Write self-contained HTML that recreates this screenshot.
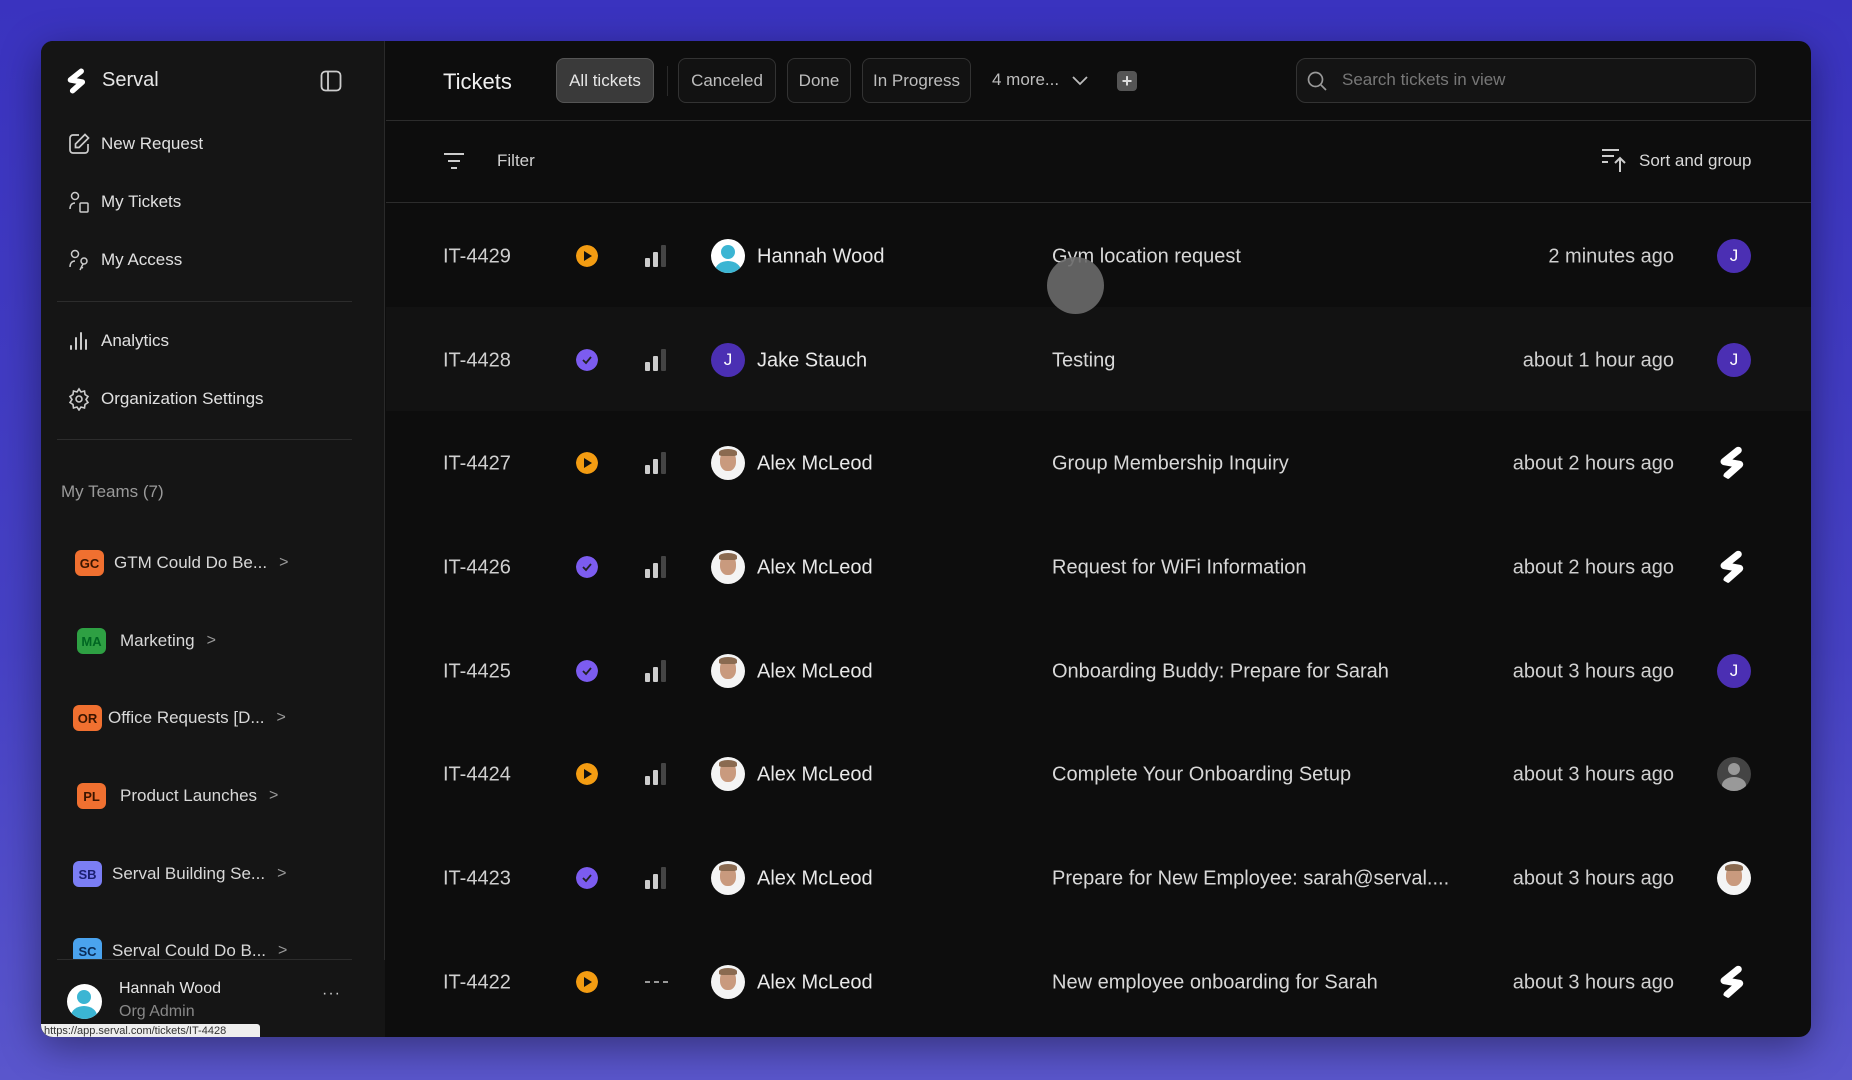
<!DOCTYPE html>
<html><head><meta charset="utf-8"><style>
*{box-sizing:border-box;margin:0;padding:0}
body{width:1852px;height:1080px;overflow:hidden;font-family:"Liberation Sans",sans-serif;background:linear-gradient(180deg,#3a33bf 0%,#4641c4 60%,#5a56cc 100%);position:relative}
.win{position:absolute;left:41px;top:41px;width:1770px;height:996px;border-radius:12px;background:#0d0d0d;overflow:hidden;box-shadow:0 10px 40px rgba(0,0,0,.4)}
.side{position:absolute;left:0;top:0;width:344px;height:100%;background:#151515;border-right:1px solid #2a2a2a}
.abs{position:absolute}
.t{color:#e6e6e6;white-space:nowrap}
.nav{position:absolute;left:26px;font-size:17px;color:#e0e0e0;display:flex;align-items:center;gap:10px}
.nav svg{width:24px;height:24px}
.hr{position:absolute;height:1px;background:#2c2c2c}
.team{position:absolute;display:flex;align-items:center;font-size:17px;color:#d8d8d8}
.badge{width:29px;height:26px;border-radius:6px;font-size:13px;font-weight:bold;display:flex;align-items:center;justify-content:center;margin-right:10px}
.chev{color:#999;margin-left:12px;font-size:16px}
.chip{position:absolute;top:17px;height:45px;border:1px solid #333;border-radius:8px;color:#bdbdbd;font-size:17px;display:flex;align-items:center;justify-content:center;background:#121212}
.row{position:absolute;left:345px;width:1425px;height:104px}
.row .t{position:absolute;top:52%;transform:translateY(-50%);font-size:20px}
.id{left:57px;color:#cfcfcf!important}
.name{left:371px;color:#e8e8e8}
.title{left:666px;color:#d8d8d8!important}
.time{right:137px;color:#d0d0d0!important}
.st{position:absolute;left:190px;top:42px;width:22px;height:22px;border-radius:50%}
.bars{position:absolute;left:259px;top:42px}
.av{position:absolute;left:325px;top:36px;width:34px;height:34px;border-radius:50%;overflow:hidden}
.as{position:absolute;left:1331px;top:36px;width:34px;height:34px;border-radius:50%;overflow:hidden}
.j{background:#4b2fb3;color:#fff;font-size:17px;display:flex;align-items:center;justify-content:center}
.face{background:#f4f4f4}
.face::before{content:"";position:absolute;left:9px;top:5px;width:16px;height:20px;border-radius:45%;background:#c99a7e}
.face::after{content:"";position:absolute;left:8px;top:3px;width:18px;height:7px;border-radius:50% 50% 20% 20%;background:#8a6a50}
.hw{background:#fff}
.hw::before{content:"";position:absolute;left:10px;top:6px;width:14px;height:14px;border-radius:50%;background:#3bb5d3}
.hw::after{content:"";position:absolute;left:4px;top:22px;width:26px;height:20px;border-radius:50%;background:#3bb5d3}
.gp{background:#444}
.gp::before{content:"";position:absolute;left:11px;top:6px;width:12px;height:12px;border-radius:50%;background:#999}
.gp::after{content:"";position:absolute;left:5px;top:20px;width:24px;height:16px;border-radius:50%;background:#999}
</style></head><body>
<div class="win">
 <div class="side">
  <svg class="abs" style="left:24px;top:27px" width="26" height="26" viewBox="0 0 24 24"><polyline points="15,3 5,11 16,13 7,21" fill="none" stroke="#fff" stroke-width="5" stroke-linejoin="round" stroke-linecap="round"/></svg>
  <div class="abs t" style="left:61px;top:28px;font-size:20px">Serval</div>
  <svg class="abs" style="left:279px;top:29px" width="22" height="22" viewBox="0 0 22 22"><rect x="1.5" y="1.5" width="19" height="19" rx="4" fill="none" stroke="#ccc" stroke-width="1.8"/><line x1="8" y1="2" x2="8" y2="20" stroke="#ccc" stroke-width="1.8"/></svg>
  <div class="nav" style="top:91px"><svg viewBox="0 0 24 24" fill="none" stroke="#ccc" stroke-width="1.7"><path d="M12 3H6a3 3 0 0 0-3 3v12a3 3 0 0 0 3 3h12a3 3 0 0 0 3-3v-6"/><path d="M18 2.5l3.5 3.5L12 15.5H8.5V12z"/></svg>New Request</div>
  <div class="nav" style="top:149px"><svg viewBox="0 0 24 24" fill="none" stroke="#ccc" stroke-width="1.5"><circle cx="8" cy="6" r="3.5"/><path d="M3 19c0-4 2-6 5-6"/><rect x="13" y="13" width="8" height="9" rx="1"/></svg>My Tickets</div>
  <div class="nav" style="top:207px"><svg viewBox="0 0 24 24" fill="none" stroke="#ccc" stroke-width="1.5"><circle cx="8" cy="6" r="3.5"/><path d="M3 19c0-4 2-6 5-6"/><circle cx="17" cy="13" r="3"/><path d="M16 16l-3 6M14 19l2 1"/></svg>My Access</div>
  <div class="hr" style="left:16px;width:295px;top:260px"></div>
  <div class="nav" style="top:288px"><svg viewBox="0 0 24 24" fill="none" stroke="#ccc" stroke-width="2" stroke-linecap="round"><path d="M4 20v-3M9 20V9M14 20V4M19 20v-9"/></svg>Analytics</div>
  <div class="nav" style="top:346px"><svg viewBox="0 0 24 24" fill="none" stroke="#ccc" stroke-width="1.6"><circle cx="12" cy="12" r="3"/><path d="M12 2l2 3 3.5-1 .5 3.5 3 2-2 3 2 3-3 2-.5 3.5-3.5-1-2 3-2-3-3.5 1-.5-3.5-3-2 2-3-2-3 3-2 .5-3.5 3.5 1z"/></svg>Organization Settings</div>
  <div class="hr" style="left:16px;width:295px;top:398px"></div>
  <div class="abs" style="left:20px;top:441px;font-size:17px;color:#9a9a9a">My Teams (7)</div>
  <div class="team" style="left:34px;top:509px"><div class="badge" style="background:#f07030;color:#3a1500">GC</div>GTM Could Do Be...<span class="chev">&gt;</span></div>
  <div class="team" style="left:36px;top:587px"><div class="badge" style="background:#2ea043;color:#062">MA</div><span style="margin-left:4px">Marketing</span><span class="chev">&gt;</span></div>
  <div class="team" style="left:32px;top:664px"><div class="badge" style="background:#f07030;color:#3a1500;margin-right:6px">OR</div>Office Requests [D...<span class="chev">&gt;</span></div>
  <div class="team" style="left:36px;top:742px"><div class="badge" style="background:#f07030;color:#3a1500">PL</div><span style="margin-left:4px">Product Launches</span><span class="chev">&gt;</span></div>
  <div class="team" style="left:32px;top:820px"><div class="badge" style="background:#7b7ef5;color:#1a1f70">SB</div>Serval Building Se...<span class="chev">&gt;</span></div>
  <div class="team" style="left:32px;top:897px"><div class="badge" style="background:#4aa3ee;color:#0a2a55">SC</div>Serval Could Do B...<span class="chev">&gt;</span></div>
  <div class="abs" style="left:0;top:919px;width:344px;height:80px;background:#151515"></div>
  <div class="hr" style="left:16px;width:295px;top:918px"></div>
  <div class="abs hw" style="left:26px;top:943px;width:35px;height:35px;border-radius:50%;overflow:hidden"></div>
  <div class="abs t" style="left:78px;top:939px;font-size:16px">Hannah Wood</div>
  <div class="abs" style="left:78px;top:962px;font-size:16px;color:#888">Org Admin</div>
  <div class="abs" style="left:281px;top:944px;color:#ccc;font-size:16px;letter-spacing:1px">···</div>
  <div class="abs" style="left:0;top:983px;width:219px;height:14px;background:#eee;border-radius:0 3px 0 0;font-size:11px;color:#333;padding-left:3px;line-height:14px;white-space:nowrap;overflow:hidden">https://app.serval.com/tickets/IT-4428</div>
 </div>
 <div class="abs t" style="left:402px;top:28px;font-size:22px;color:#f0f0f0">Tickets</div>
 <div class="chip" style="left:515px;width:98px;background:#3a3a3a;border-color:#555;color:#e6e6e6">All tickets</div>
 <div class="abs" style="left:626px;top:25px;width:1px;height:30px;background:#2a2a2a"></div>
 <div class="chip" style="left:637px;width:98px">Canceled</div>
 <div class="chip" style="left:746px;width:64px">Done</div>
 <div class="chip" style="left:821px;width:109px">In Progress</div>
 <div class="abs" style="left:951px;top:29px;font-size:17px;color:#bdbdbd">4 more...</div>
 <svg class="abs" style="left:1030px;top:32px" width="18" height="16" viewBox="0 0 18 16"><path d="M2 4l7 7 7-7" fill="none" stroke="#bbb" stroke-width="1.8"/></svg>
 <div class="abs" style="left:1076px;top:30px;width:20px;height:20px;border-radius:4px;background:#555;color:#ddd;font-size:18px;line-height:20px;text-align:center;font-weight:bold">+</div>
 <div class="abs" style="left:1255px;top:17px;width:460px;height:45px;border:1px solid #333;border-radius:10px;background:#141414"></div>
 <svg class="abs" style="left:1265px;top:29px" width="22" height="22" viewBox="0 0 22 22"><circle cx="9.5" cy="9.5" r="7" fill="none" stroke="#999" stroke-width="1.7"/><path d="M15 15l5 5" stroke="#999" stroke-width="1.7"/></svg>
 <div class="abs" style="left:1301px;top:29px;font-size:17px;color:#777">Search tickets in view</div>
 <div class="hr" style="left:345px;width:1425px;top:79px"></div>
 <svg class="abs" style="left:402px;top:111px" width="22" height="18" viewBox="0 0 22 18"><path d="M1 2h20M5 9h12M8 16h6" stroke="#ccc" stroke-width="2"/></svg>
 <div class="abs" style="left:456px;top:110px;font-size:17px;color:#d0d0d0">Filter</div>
 <svg class="abs" style="left:1560px;top:106px" width="28" height="26" viewBox="0 0 28 26"><path d="M1 3h17M1 9h12M1 15h6" stroke="#ccc" stroke-width="2"/><path d="M19 25V11M14 16l5-5 5 5" fill="none" stroke="#ccc" stroke-width="2"/></svg>
 <div class="abs" style="left:1598px;top:110px;font-size:17px;color:#d8d8d8">Sort and group</div>
 <div class="hr" style="left:345px;width:1425px;top:161px"></div>

 <div class="row" style="top:162px;z-index:2"><div class="t id">IT-4429</div><svg class="st" viewBox="0 0 22 22"><circle cx="11" cy="11" r="11" fill="#f39c12"/><path d="M8 6l8 5-8 5z" fill="#111"/></svg><svg class="bars" width="22" height="22" viewBox="0 0 22 22"><rect x="0" y="13" width="5" height="9" rx="1" fill="#ccc"/><rect x="8" y="7" width="5" height="15" rx="1" fill="#ccc"/><rect x="16" y="0" width="5" height="22" rx="1" fill="#444"/></svg><div class="av hw"></div><div class="t name">Hannah Wood</div><div class="t title">Gym location request</div><div class="t time">2 minutes ago</div><div class="as j">J</div><div class="abs" style="left:661px;top:54px;width:57px;height:57px;border-radius:50%;background:#6a6a6a;opacity:.9"></div></div>
 <div class="row" style="top:266px;background:#121212"><div class="t id">IT-4428</div><svg class="st" viewBox="0 0 22 22"><circle cx="11" cy="11" r="11" fill="#7c5cf0"/><path d="M7 11l3 3 5-6" fill="none" stroke="#222" stroke-width="1.8"/></svg><svg class="bars" width="22" height="22" viewBox="0 0 22 22"><rect x="0" y="13" width="5" height="9" rx="1" fill="#ccc"/><rect x="8" y="7" width="5" height="15" rx="1" fill="#ccc"/><rect x="16" y="0" width="5" height="22" rx="1" fill="#444"/></svg><div class="av j">J</div><div class="t name">Jake Stauch</div><div class="t title">Testing</div><div class="t time">about 1 hour ago</div><div class="as j">J</div></div>
 <div class="row" style="top:369px"><div class="t id">IT-4427</div><svg class="st" viewBox="0 0 22 22"><circle cx="11" cy="11" r="11" fill="#f39c12"/><path d="M8 6l8 5-8 5z" fill="#111"/></svg><svg class="bars" width="22" height="22" viewBox="0 0 22 22"><rect x="0" y="13" width="5" height="9" rx="1" fill="#ccc"/><rect x="8" y="7" width="5" height="15" rx="1" fill="#ccc"/><rect x="16" y="0" width="5" height="22" rx="1" fill="#444"/></svg><div class="av face"></div><div class="t name">Alex McLeod</div><div class="t title">Group Membership Inquiry</div><div class="t time">about 2 hours ago</div><svg class="as" viewBox="0 0 24 24"><polyline points="15,3 5,11 16,13 7,21" fill="none" stroke="#fff" stroke-width="5" stroke-linejoin="round" stroke-linecap="round"/></svg></div>
 <div class="row" style="top:473px"><div class="t id">IT-4426</div><svg class="st" viewBox="0 0 22 22"><circle cx="11" cy="11" r="11" fill="#7c5cf0"/><path d="M7 11l3 3 5-6" fill="none" stroke="#222" stroke-width="1.8"/></svg><svg class="bars" width="22" height="22" viewBox="0 0 22 22"><rect x="0" y="13" width="5" height="9" rx="1" fill="#ccc"/><rect x="8" y="7" width="5" height="15" rx="1" fill="#ccc"/><rect x="16" y="0" width="5" height="22" rx="1" fill="#444"/></svg><div class="av face"></div><div class="t name">Alex McLeod</div><div class="t title">Request for WiFi Information</div><div class="t time">about 2 hours ago</div><svg class="as" viewBox="0 0 24 24"><polyline points="15,3 5,11 16,13 7,21" fill="none" stroke="#fff" stroke-width="5" stroke-linejoin="round" stroke-linecap="round"/></svg></div>
 <div class="row" style="top:577px"><div class="t id">IT-4425</div><svg class="st" viewBox="0 0 22 22"><circle cx="11" cy="11" r="11" fill="#7c5cf0"/><path d="M7 11l3 3 5-6" fill="none" stroke="#222" stroke-width="1.8"/></svg><svg class="bars" width="22" height="22" viewBox="0 0 22 22"><rect x="0" y="13" width="5" height="9" rx="1" fill="#ccc"/><rect x="8" y="7" width="5" height="15" rx="1" fill="#ccc"/><rect x="16" y="0" width="5" height="22" rx="1" fill="#444"/></svg><div class="av face"></div><div class="t name">Alex McLeod</div><div class="t title">Onboarding Buddy: Prepare for Sarah</div><div class="t time">about 3 hours ago</div><div class="as j">J</div></div>
 <div class="row" style="top:680px"><div class="t id">IT-4424</div><svg class="st" viewBox="0 0 22 22"><circle cx="11" cy="11" r="11" fill="#f39c12"/><path d="M8 6l8 5-8 5z" fill="#111"/></svg><svg class="bars" width="22" height="22" viewBox="0 0 22 22"><rect x="0" y="13" width="5" height="9" rx="1" fill="#ccc"/><rect x="8" y="7" width="5" height="15" rx="1" fill="#ccc"/><rect x="16" y="0" width="5" height="22" rx="1" fill="#444"/></svg><div class="av face"></div><div class="t name">Alex McLeod</div><div class="t title">Complete Your Onboarding Setup</div><div class="t time">about 3 hours ago</div><div class="as gp"></div></div>
 <div class="row" style="top:784px"><div class="t id">IT-4423</div><svg class="st" viewBox="0 0 22 22"><circle cx="11" cy="11" r="11" fill="#7c5cf0"/><path d="M7 11l3 3 5-6" fill="none" stroke="#222" stroke-width="1.8"/></svg><svg class="bars" width="22" height="22" viewBox="0 0 22 22"><rect x="0" y="13" width="5" height="9" rx="1" fill="#ccc"/><rect x="8" y="7" width="5" height="15" rx="1" fill="#ccc"/><rect x="16" y="0" width="5" height="22" rx="1" fill="#444"/></svg><div class="av face"></div><div class="t name">Alex McLeod</div><div class="t title">Prepare for New Employee: sarah@serval....</div><div class="t time">about 3 hours ago</div><div class="as face"></div></div>
 <div class="row" style="top:888px"><div class="t id">IT-4422</div><svg class="st" viewBox="0 0 22 22"><circle cx="11" cy="11" r="11" fill="#f39c12"/><path d="M8 6l8 5-8 5z" fill="#111"/></svg><svg class="bars" width="24" height="22" viewBox="0 0 24 22"><path d="M0 11h5M9 11h5M18 11h5" stroke="#999" stroke-width="2"/></svg><div class="av face"></div><div class="t name">Alex McLeod</div><div class="t title">New employee onboarding for Sarah</div><div class="t time">about 3 hours ago</div><svg class="as" viewBox="0 0 24 24"><polyline points="15,3 5,11 16,13 7,21" fill="none" stroke="#fff" stroke-width="5" stroke-linejoin="round" stroke-linecap="round"/></svg></div>
</div>
</body></html>
